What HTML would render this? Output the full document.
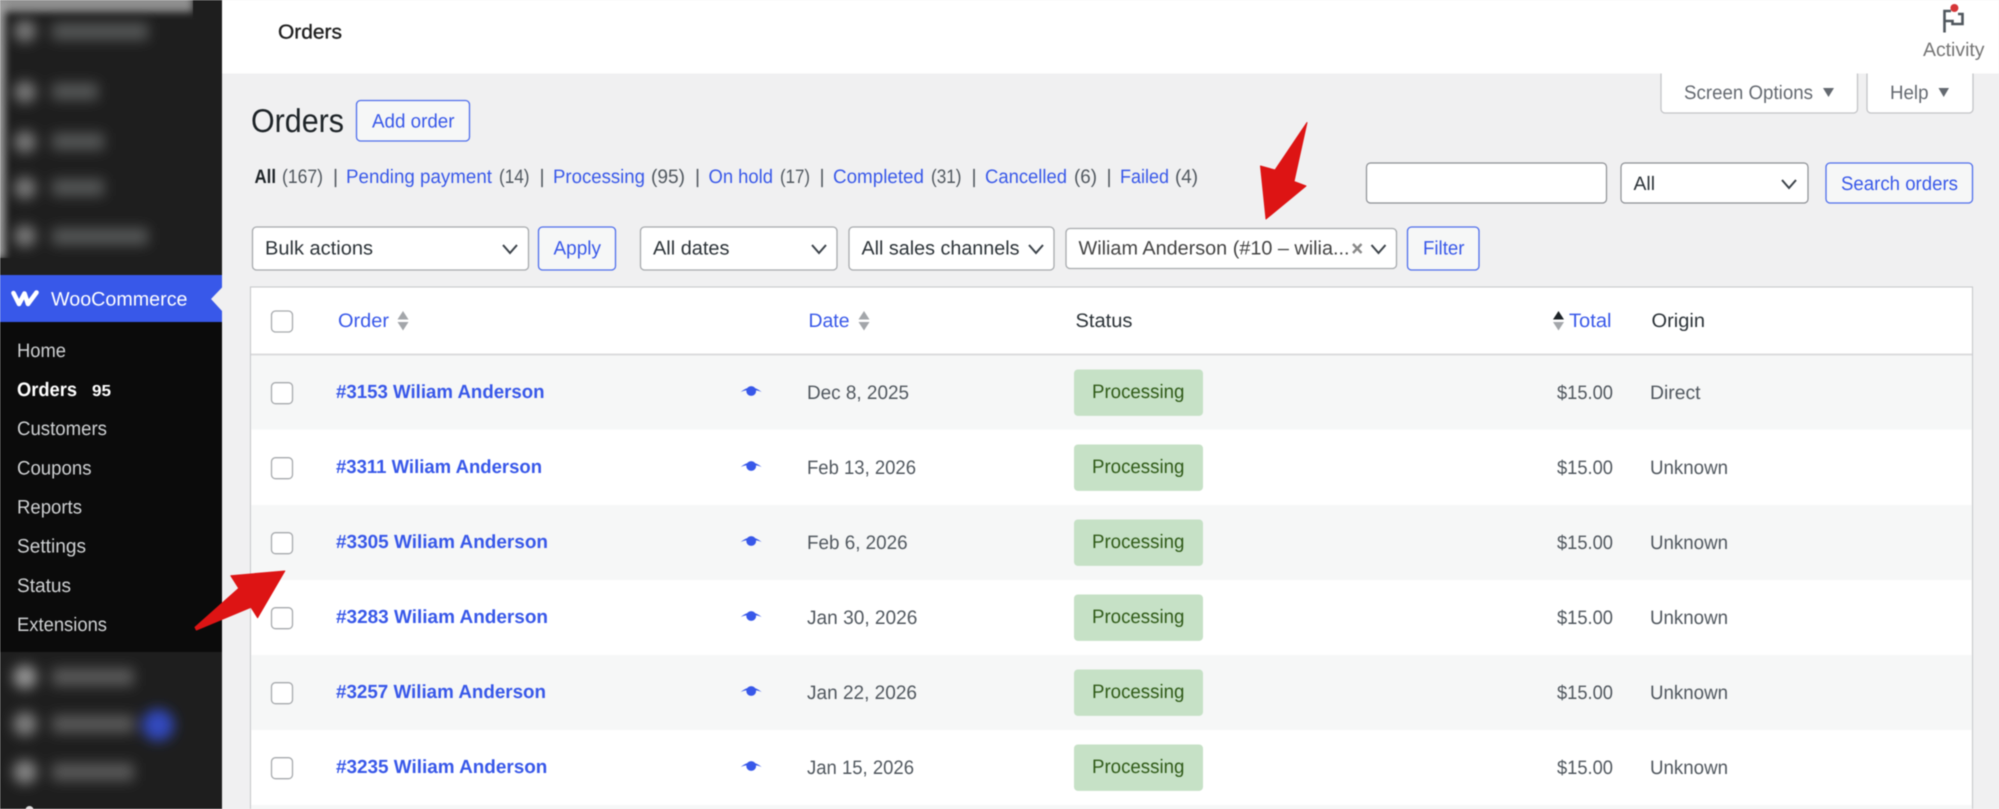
<!DOCTYPE html>
<html lang="en"><head><meta charset="utf-8"><title>Orders</title>
<style>
html,body{margin:0;padding:0;background:#f0f0f1;width:1999px;height:809px;overflow:hidden}
svg{display:block;filter:blur(.45px)}
text{font-family:"Liberation Sans",Arial,sans-serif;font-size:19.5px;text-rendering:geometricPrecision}
.m{fill:#cfd1d3}.l{fill:#3858e9}.g{fill:#50575e}.d{fill:#2c3338}.n{fill:#3858e9;font-weight:700;font-size:19px}
.p{fill:#2f5a17}
.b{fill:#f6f7f7;stroke:#4f6eec;stroke-width:1.3}
.s{fill:#fff;stroke:#a7aaad;stroke-width:1.3}
.c{fill:#fff;stroke:#a7aaad;stroke-width:1.3}
.ch{fill:none;stroke:#3c434a;stroke-width:2}
.bd{fill:#c6e1c6}
.e{fill:#3858e9}
.u{fill:#a3a6aa}
</style></head><body>
<svg width="1999" height="809" viewBox="0 0 1999 809" xmlns="http://www.w3.org/2000/svg">
<defs><filter id="bl2" x="-50%" y="-50%" width="200%" height="200%"><feGaussianBlur stdDeviation="6.5"/></filter>
<filter id="bl3" x="-50%" y="-50%" width="200%" height="200%"><feGaussianBlur stdDeviation="4"/></filter></defs>
<rect width="1999" height="809" fill="#f0f0f1"/>
<!-- sidebar -->
<rect x="0" y="0" width="222" height="809" fill="#1e1e1e"/>
<g filter="url(#bl3)">
<rect x="-8" y="-8" width="201" height="20" fill="#8f8f8f"/>
<rect x="-8" y="0" width="13" height="258" fill="#a0a0a0"/>
</g>
<rect x="193" y="0" width="29" height="18" fill="#1e1e1e"/>
<rect x="0" y="258" width="222" height="17" fill="#1e1e1e"/>
<g filter="url(#bl2)" fill="#7c7c7c">
<circle cx="25" cy="31" r="11"/><rect x="52" y="23" width="96" height="17" fill="#555757"/>
<circle cx="25" cy="92" r="11"/><rect x="52" y="83" width="46" height="17" fill="#555757"/>
<circle cx="25" cy="142" r="11"/><rect x="52" y="133" width="52" height="17" fill="#555757"/>
<circle cx="25" cy="188" r="11"/><rect x="52" y="179" width="52" height="17" fill="#555757"/>
<circle cx="25" cy="236" r="11"/><rect x="52" y="228" width="96" height="17" fill="#555757"/>
</g>
<rect x="0" y="275" width="222" height="47" fill="#3858e9"/>
<path d="M13.5 293 L19 304 L24.5 293.5 L28 304 L36.5 292.5" fill="none" stroke="#fff" stroke-width="4.6" stroke-linejoin="round" stroke-linecap="round"/>
<text x="51" y="305.5" fill="#fff" textLength="136.5" lengthAdjust="spacingAndGlyphs">WooCommerce</text>
<path d="M222 287.5 L211 299 L222 311 Z" fill="#f0f0f1"/>
<rect x="0" y="322" width="222" height="330" fill="#0b0b0b"/>
<text class="m" x="17" y="357" textLength="49" lengthAdjust="spacingAndGlyphs">Home</text>
<text x="17" y="396" fill="#fff" font-weight="700" textLength="60" lengthAdjust="spacingAndGlyphs">Orders</text>
<text x="92" y="396" fill="#fff" font-weight="700" style="font-size:16px" textLength="19" lengthAdjust="spacingAndGlyphs">95</text>
<text class="m" x="17" y="435" textLength="90" lengthAdjust="spacingAndGlyphs">Customers</text>
<text class="m" x="17" y="474.5" textLength="74.5" lengthAdjust="spacingAndGlyphs">Coupons</text>
<text class="m" x="17" y="513.5" textLength="65" lengthAdjust="spacingAndGlyphs">Reports</text>
<text class="m" x="17" y="552.5" textLength="69" lengthAdjust="spacingAndGlyphs">Settings</text>
<text class="m" x="17" y="592" textLength="54" lengthAdjust="spacingAndGlyphs">Status</text>
<text class="m" x="17" y="631" textLength="90" lengthAdjust="spacingAndGlyphs">Extensions</text>
<g filter="url(#bl2)">
<circle cx="25" cy="677" r="12" fill="#969696"/><rect x="52" y="668" width="82" height="18" fill="#585858"/>
<circle cx="25" cy="724" r="12" fill="#808080"/><rect x="52" y="715" width="82" height="18" fill="#585858"/>
<circle cx="25" cy="772" r="12" fill="#868686"/><rect x="52" y="763" width="82" height="18" fill="#585858"/>
<circle cx="158" cy="725" r="16" fill="#3348bd"/>
</g>
<circle cx="29.5" cy="810" r="4" fill="#ddd"/>
<!-- header -->
<rect x="222" y="0" width="1777" height="73.5" fill="#fff"/>
<text x="278" y="38.5" fill="#1e1e1e" stroke="#1e1e1e" stroke-width=".35" style="font-size:20px" textLength="64" lengthAdjust="spacingAndGlyphs">Orders</text>
<path d="M1944.5 32.5 V11 H1951 M1958 14 H1962.5 V24 H1952.5 V21 H1944.5" fill="none" stroke="#50575e" stroke-width="2.6"/>
<circle cx="1954.4" cy="8" r="4" fill="#d63638"/>
<text x="1923" y="56" fill="#757575" textLength="61.5" lengthAdjust="spacingAndGlyphs">Activity</text>
<!-- screen tabs -->
<path d="M1661 73.5 V109 a4 4 0 0 0 4 4 H1853.5 a4 4 0 0 0 4 -4 V73.5" fill="#fff" stroke="#c3c4c7" stroke-width="1.3"/>
<path d="M1867 73.5 V109 a4 4 0 0 0 4 4 H1969 a4 4 0 0 0 4 -4 V73.5" fill="#fff" stroke="#c3c4c7" stroke-width="1.3"/>
<text x="1684" y="99" fill="#646970" textLength="129" lengthAdjust="spacingAndGlyphs">Screen Options</text>
<path d="M1823 88 H1834 L1828.5 97 Z" fill="#646970"/>
<text x="1890" y="99" fill="#646970" textLength="38.5" lengthAdjust="spacingAndGlyphs">Help</text>
<path d="M1938.5 88 H1949 L1943.7 97 Z" fill="#646970"/>
<!-- title -->
<text x="251" y="132" fill="#1d2327" style="font-size:33px" textLength="93" lengthAdjust="spacingAndGlyphs">Orders</text>
<rect class="b" x="356.5" y="100.5" width="113" height="40.5" rx="4"/>
<text class="l" x="372" y="127.5" textLength="82.5" lengthAdjust="spacingAndGlyphs">Add order</text>
<!-- status links -->
<g>
<text x="254.5" y="183" fill="#1d2327" font-weight="700" textLength="21.5" lengthAdjust="spacingAndGlyphs">All</text>
<text class="g" x="282" y="183" textLength="41" lengthAdjust="spacingAndGlyphs">(167)</text>
<text class="g" x="333" y="183">|</text>
<text class="l" x="346" y="183" textLength="146" lengthAdjust="spacingAndGlyphs">Pending payment</text>
<text class="g" x="499" y="183" textLength="30.5" lengthAdjust="spacingAndGlyphs">(14)</text>
<text class="g" x="539.5" y="183">|</text>
<text class="l" x="553" y="183" textLength="92" lengthAdjust="spacingAndGlyphs">Processing</text>
<text class="g" x="651" y="183" textLength="34" lengthAdjust="spacingAndGlyphs">(95)</text>
<text class="g" x="695" y="183">|</text>
<text class="l" x="708.5" y="183" textLength="64.5" lengthAdjust="spacingAndGlyphs">On hold</text>
<text class="g" x="780" y="183" textLength="30" lengthAdjust="spacingAndGlyphs">(17)</text>
<text class="g" x="819.5" y="183">|</text>
<text class="l" x="833" y="183" textLength="91" lengthAdjust="spacingAndGlyphs">Completed</text>
<text class="g" x="931" y="183" textLength="30.5" lengthAdjust="spacingAndGlyphs">(31)</text>
<text class="g" x="971.5" y="183">|</text>
<text class="l" x="985" y="183" textLength="82" lengthAdjust="spacingAndGlyphs">Cancelled</text>
<text class="g" x="1074" y="183" textLength="23" lengthAdjust="spacingAndGlyphs">(6)</text>
<text class="g" x="1106.5" y="183">|</text>
<text class="l" x="1120" y="183" textLength="49" lengthAdjust="spacingAndGlyphs">Failed</text>
<text class="g" x="1175" y="183" textLength="23" lengthAdjust="spacingAndGlyphs">(4)</text>
</g>
<!-- search -->
<rect x="1366.5" y="163" width="240" height="40" rx="4" fill="#fff" stroke="#8c8f94" stroke-width="1.2"/>
<rect x="1621" y="163" width="187" height="40" rx="4" fill="#fff" stroke="#8c8f94" stroke-width="1.2"/>
<text class="d" x="1633.5" y="190" textLength="21.5" lengthAdjust="spacingAndGlyphs">All</text>
<path class="ch" d="M1782 180 L1789 188 L1796 180"/>
<rect class="b" x="1826" y="163" width="146.5" height="40" rx="4"/>
<text class="l" x="1841" y="190" textLength="117" lengthAdjust="spacingAndGlyphs">Search orders</text>
<!-- filters -->
<rect class="s" x="252.5" y="227" width="276" height="43" rx="4"/>
<text class="d" x="265" y="254.5" textLength="108" lengthAdjust="spacingAndGlyphs">Bulk actions</text>
<path class="ch" d="M503 245 L510 253 L517 245"/>
<rect class="b" x="538.5" y="227" width="77" height="43" rx="4"/>
<text class="l" x="553.5" y="254.5" textLength="47.5" lengthAdjust="spacingAndGlyphs">Apply</text>
<rect class="s" x="640.5" y="227" width="196.5" height="43" rx="4"/>
<text class="d" x="653" y="254.5" textLength="76.5" lengthAdjust="spacingAndGlyphs">All dates</text>
<path class="ch" d="M812 245 L819 253 L826 245"/>
<rect class="s" x="849" y="227" width="205" height="43" rx="4"/>
<text class="d" x="861.5" y="254.5" textLength="158" lengthAdjust="spacingAndGlyphs">All sales channels</text>
<path class="ch" d="M1029 245 L1036 253 L1043 245"/>
<rect class="s" x="1066" y="228.5" width="330.5" height="40" rx="4"/>
<text x="1078.5" y="254.5" fill="#444" textLength="271" lengthAdjust="spacingAndGlyphs">Wiliam Anderson (#10 – wilia...</text>
<path d="M1353 244 L1361.5 253 M1361.5 244 L1353 253" stroke="#8a8a8a" stroke-width="2.4" fill="none"/>
<path class="ch" d="M1371.5 245 L1378.5 253 L1385.5 245"/>
<rect class="b" x="1407.5" y="227" width="71.5" height="43" rx="4"/>
<text class="l" x="1423" y="254.5" textLength="41.5" lengthAdjust="spacingAndGlyphs">Filter</text>
<!-- table -->
<rect x="250.5" y="287" width="1722" height="530" fill="#fff" stroke="#c8c9cc" stroke-width="1.1"/>
<rect x="251" y="353.5" width="1721" height="2" fill="#dcdcde"/>
<rect x="251" y="355.5" width="1721" height="74" fill="#f6f7f7"/>
<rect x="251" y="505" width="1721" height="75" fill="#f6f7f7"/>
<rect x="251" y="655" width="1721" height="75" fill="#f6f7f7"/>
<rect x="251" y="805" width="1721" height="5" fill="#f6f7f7"/>
<!-- thead -->
<rect class="c" x="271.5" y="311" width="21" height="21" rx="4"/>
<text class="l" x="338" y="327" textLength="51" lengthAdjust="spacingAndGlyphs">Order</text>
<path class="u" d="M403 311 L408.5 319.5 H397.5 Z M397.5 322 H408.5 L403 330.5 Z"/>
<text class="l" x="808.5" y="327" textLength="41" lengthAdjust="spacingAndGlyphs">Date</text>
<path class="u" d="M864 311 L869.5 319.5 H858.5 Z M858.5 322 H869.5 L864 330.5 Z"/>
<text class="d" x="1075.5" y="327" textLength="57" lengthAdjust="spacingAndGlyphs">Status</text>
<path d="M1558.5 311 L1564 319.5 H1553 Z" fill="#1d2327"/><path class="u" d="M1553 322 H1564 L1558.5 330.5 Z"/>
<text class="l" x="1569" y="327" textLength="42.5" lengthAdjust="spacingAndGlyphs">Total</text>
<text class="d" x="1651.5" y="327" textLength="53.5" lengthAdjust="spacingAndGlyphs">Origin</text>
<!-- row 1 -->
<g>
<rect class="c" x="271.5" y="382.7" width="21" height="21" rx="4"/>
<text class="n" x="336" y="398" textLength="208.5" lengthAdjust="spacingAndGlyphs">#3153 Wiliam Anderson</text>
<path class="e" d="M740.7 392 Q751 383 761.7 392 Q751 387.8 740.7 392 Z"/><circle class="e" cx="751.2" cy="391" r="4.9"/>
<text class="g" x="807" y="399" textLength="102" lengthAdjust="spacingAndGlyphs">Dec 8, 2025</text>
<rect class="bd" x="1074" y="369.5" width="129" height="46.4" rx="4"/>
<text class="p" x="1092" y="398" textLength="92.4" lengthAdjust="spacingAndGlyphs">Processing</text>
<text class="g" x="1557" y="399" textLength="56" lengthAdjust="spacingAndGlyphs">$15.00</text>
<text class="g" x="1650" y="399" textLength="50.5" lengthAdjust="spacingAndGlyphs">Direct</text>
</g>
<!-- row 2 -->
<g>
<rect class="c" x="271.5" y="457.7" width="21" height="21" rx="4"/>
<text class="n" x="336" y="473" textLength="206" lengthAdjust="spacingAndGlyphs">#3311 Wiliam Anderson</text>
<path class="e" d="M740.7 467 Q751 458 761.7 467 Q751 462.8 740.7 467 Z"/><circle class="e" cx="751.2" cy="466" r="4.9"/>
<text class="g" x="807" y="474" textLength="109" lengthAdjust="spacingAndGlyphs">Feb 13, 2026</text>
<rect class="bd" x="1074" y="444.5" width="129" height="46.4" rx="4"/>
<text class="p" x="1092" y="473" textLength="92.4" lengthAdjust="spacingAndGlyphs">Processing</text>
<text class="g" x="1557" y="474" textLength="56" lengthAdjust="spacingAndGlyphs">$15.00</text>
<text class="g" x="1650" y="474" textLength="78" lengthAdjust="spacingAndGlyphs">Unknown</text>
</g>
<!-- row 3 -->
<g>
<rect class="c" x="271.5" y="532.7" width="21" height="21" rx="4"/>
<text class="n" x="336" y="548" textLength="212" lengthAdjust="spacingAndGlyphs">#3305 Wiliam Anderson</text>
<path class="e" d="M740.7 542 Q751 533 761.7 542 Q751 537.8 740.7 542 Z"/><circle class="e" cx="751.2" cy="541" r="4.9"/>
<text class="g" x="807" y="549" textLength="100.6" lengthAdjust="spacingAndGlyphs">Feb 6, 2026</text>
<rect class="bd" x="1074" y="519.5" width="129" height="46.4" rx="4"/>
<text class="p" x="1092" y="548" textLength="92.4" lengthAdjust="spacingAndGlyphs">Processing</text>
<text class="g" x="1557" y="549" textLength="56" lengthAdjust="spacingAndGlyphs">$15.00</text>
<text class="g" x="1650" y="549" textLength="78" lengthAdjust="spacingAndGlyphs">Unknown</text>
</g>
<!-- row 4 -->
<g>
<rect class="c" x="271.5" y="607.7" width="21" height="21" rx="4"/>
<text class="n" x="336" y="623" textLength="212" lengthAdjust="spacingAndGlyphs">#3283 Wiliam Anderson</text>
<path class="e" d="M740.7 617 Q751 608 761.7 617 Q751 612.8 740.7 617 Z"/><circle class="e" cx="751.2" cy="616" r="4.9"/>
<text class="g" x="807" y="624" textLength="110.4" lengthAdjust="spacingAndGlyphs">Jan 30, 2026</text>
<rect class="bd" x="1074" y="594.5" width="129" height="46.4" rx="4"/>
<text class="p" x="1092" y="623" textLength="92.4" lengthAdjust="spacingAndGlyphs">Processing</text>
<text class="g" x="1557" y="624" textLength="56" lengthAdjust="spacingAndGlyphs">$15.00</text>
<text class="g" x="1650" y="624" textLength="78" lengthAdjust="spacingAndGlyphs">Unknown</text>
</g>
<!-- row 5 -->
<g>
<rect class="c" x="271.5" y="682.7" width="21" height="21" rx="4"/>
<text class="n" x="336" y="698" textLength="210" lengthAdjust="spacingAndGlyphs">#3257 Wiliam Anderson</text>
<path class="e" d="M740.7 692 Q751 683 761.7 692 Q751 687.8 740.7 692 Z"/><circle class="e" cx="751.2" cy="691" r="4.9"/>
<text class="g" x="807" y="699" textLength="110" lengthAdjust="spacingAndGlyphs">Jan 22, 2026</text>
<rect class="bd" x="1074" y="669.5" width="129" height="46.4" rx="4"/>
<text class="p" x="1092" y="698" textLength="92.4" lengthAdjust="spacingAndGlyphs">Processing</text>
<text class="g" x="1557" y="699" textLength="56" lengthAdjust="spacingAndGlyphs">$15.00</text>
<text class="g" x="1650" y="699" textLength="78" lengthAdjust="spacingAndGlyphs">Unknown</text>
</g>
<!-- row 6 -->
<g>
<rect class="c" x="271.5" y="757.7" width="21" height="21" rx="4"/>
<text class="n" x="336" y="773" textLength="211.3" lengthAdjust="spacingAndGlyphs">#3235 Wiliam Anderson</text>
<path class="e" d="M740.7 767 Q751 758 761.7 767 Q751 762.8 740.7 767 Z"/><circle class="e" cx="751.2" cy="766" r="4.9"/>
<text class="g" x="807" y="774" textLength="107" lengthAdjust="spacingAndGlyphs">Jan 15, 2026</text>
<rect class="bd" x="1074" y="744.5" width="129" height="46.4" rx="4"/>
<text class="p" x="1092" y="773" textLength="92.4" lengthAdjust="spacingAndGlyphs">Processing</text>
<text class="g" x="1557" y="774" textLength="56" lengthAdjust="spacingAndGlyphs">$15.00</text>
<text class="g" x="1650" y="774" textLength="78" lengthAdjust="spacingAndGlyphs">Unknown</text>
</g>
<!-- annotation arrows -->
<path d="M1307 122.5 L1294 181.5 L1306 186 L1266 219 L1260.5 166 L1275 170 Z" fill="#dd1414" stroke="#dd1414" stroke-width="1" stroke-linejoin="round"/>
<path d="M284.8 571 L230.8 575.7 L238.8 588.3 L195 627.3 L196.4 630 L251 607.3 L257.6 617.7 Z" fill="#dd1414" stroke="#dd1414" stroke-width="1" stroke-linejoin="round"/>
</svg>
</body></html>
